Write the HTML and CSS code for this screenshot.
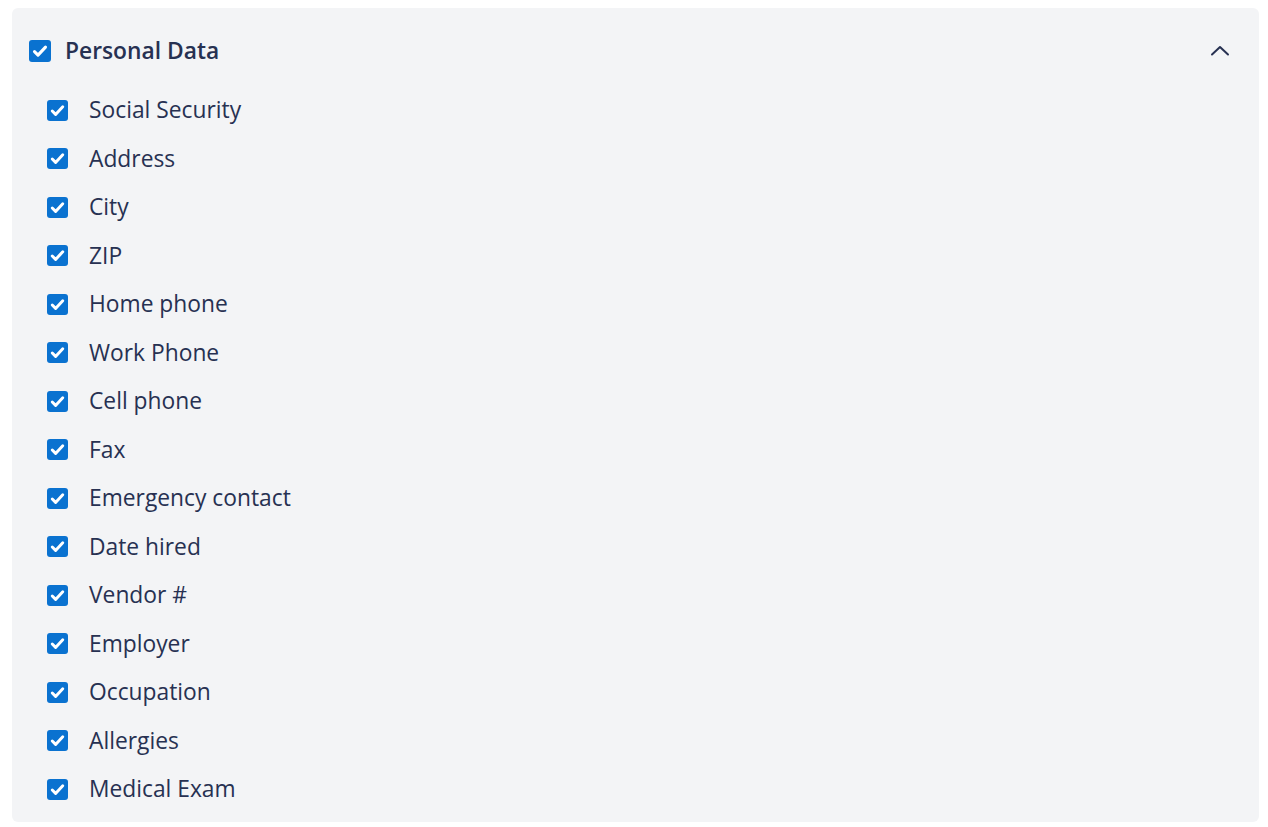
FILE: index.html
```html
<!DOCTYPE html>
<html>
<head>
<meta charset="utf-8">
<link rel="stylesheet" href="styles.css">
</head>
<body>
<section class="panel">
  <div class="header">
    <label class="parent">
      <span class="box box-lg"><svg viewBox="0 0 20 20"><path d="M5 10.5l3.2 3.2L15 6.5" fill="none" stroke="#fff" stroke-width="2.8" stroke-linecap="round" stroke-linejoin="round"/></svg></span>
      <span class="title">Personal Data</span>
    </label>
    <svg class="chev" viewBox="0 0 20 11"><path d="M2 9.5L10 2l8 7.5" fill="none" stroke="#273152" stroke-width="2" stroke-linecap="round" stroke-linejoin="round"/></svg>
  </div>
  <ul class="list">
    <li><span class="box"><svg viewBox="0 0 20 20"><path d="M5 10.5l3.2 3.2L15 6.5" fill="none" stroke="#fff" stroke-width="2.8" stroke-linecap="round" stroke-linejoin="round"/></svg></span><span class="label">Social Security</span></li>
    <li><span class="box"><svg viewBox="0 0 20 20"><path d="M5 10.5l3.2 3.2L15 6.5" fill="none" stroke="#fff" stroke-width="2.8" stroke-linecap="round" stroke-linejoin="round"/></svg></span><span class="label">Address</span></li>
    <li><span class="box"><svg viewBox="0 0 20 20"><path d="M5 10.5l3.2 3.2L15 6.5" fill="none" stroke="#fff" stroke-width="2.8" stroke-linecap="round" stroke-linejoin="round"/></svg></span><span class="label">City</span></li>
    <li><span class="box"><svg viewBox="0 0 20 20"><path d="M5 10.5l3.2 3.2L15 6.5" fill="none" stroke="#fff" stroke-width="2.8" stroke-linecap="round" stroke-linejoin="round"/></svg></span><span class="label">ZIP</span></li>
    <li><span class="box"><svg viewBox="0 0 20 20"><path d="M5 10.5l3.2 3.2L15 6.5" fill="none" stroke="#fff" stroke-width="2.8" stroke-linecap="round" stroke-linejoin="round"/></svg></span><span class="label">Home phone</span></li>
    <li><span class="box"><svg viewBox="0 0 20 20"><path d="M5 10.5l3.2 3.2L15 6.5" fill="none" stroke="#fff" stroke-width="2.8" stroke-linecap="round" stroke-linejoin="round"/></svg></span><span class="label">Work Phone</span></li>
    <li><span class="box"><svg viewBox="0 0 20 20"><path d="M5 10.5l3.2 3.2L15 6.5" fill="none" stroke="#fff" stroke-width="2.8" stroke-linecap="round" stroke-linejoin="round"/></svg></span><span class="label">Cell phone</span></li>
    <li><span class="box"><svg viewBox="0 0 20 20"><path d="M5 10.5l3.2 3.2L15 6.5" fill="none" stroke="#fff" stroke-width="2.8" stroke-linecap="round" stroke-linejoin="round"/></svg></span><span class="label">Fax</span></li>
    <li><span class="box"><svg viewBox="0 0 20 20"><path d="M5 10.5l3.2 3.2L15 6.5" fill="none" stroke="#fff" stroke-width="2.8" stroke-linecap="round" stroke-linejoin="round"/></svg></span><span class="label">Emergency contact</span></li>
    <li><span class="box"><svg viewBox="0 0 20 20"><path d="M5 10.5l3.2 3.2L15 6.5" fill="none" stroke="#fff" stroke-width="2.8" stroke-linecap="round" stroke-linejoin="round"/></svg></span><span class="label">Date hired</span></li>
    <li><span class="box"><svg viewBox="0 0 20 20"><path d="M5 10.5l3.2 3.2L15 6.5" fill="none" stroke="#fff" stroke-width="2.8" stroke-linecap="round" stroke-linejoin="round"/></svg></span><span class="label">Vendor #</span></li>
    <li><span class="box"><svg viewBox="0 0 20 20"><path d="M5 10.5l3.2 3.2L15 6.5" fill="none" stroke="#fff" stroke-width="2.8" stroke-linecap="round" stroke-linejoin="round"/></svg></span><span class="label">Employer</span></li>
    <li><span class="box"><svg viewBox="0 0 20 20"><path d="M5 10.5l3.2 3.2L15 6.5" fill="none" stroke="#fff" stroke-width="2.8" stroke-linecap="round" stroke-linejoin="round"/></svg></span><span class="label">Occupation</span></li>
    <li><span class="box"><svg viewBox="0 0 20 20"><path d="M5 10.5l3.2 3.2L15 6.5" fill="none" stroke="#fff" stroke-width="2.8" stroke-linecap="round" stroke-linejoin="round"/></svg></span><span class="label">Allergies</span></li>
    <li><span class="box"><svg viewBox="0 0 20 20"><path d="M5 10.5l3.2 3.2L15 6.5" fill="none" stroke="#fff" stroke-width="2.8" stroke-linecap="round" stroke-linejoin="round"/></svg></span><span class="label">Medical Exam</span></li>
  </ul>
</section>
</body>
</html>
```
FILE: styles.css
```css
html, body {
  background: #ffffff;
}
body {
  margin: 8px 9px 0 12px;
  font-family: "Open Sans", "Noto Sans", sans-serif;
  color: #273152;
}
.panel {
  background: #f3f4f6;
  border-radius: 6px;
  padding: 20px 29px 8px 17px;
  box-sizing: border-box;
  height: 814px;
}
.header {
  height: 45px;
  display: flex;
  align-items: center;
  justify-content: space-between;
}
.parent {
  display: flex;
  align-items: center;
  gap: 14px;
}
.title {
  font-size: 22.8px;
  font-weight: 600;
  line-height: 1.3;
  margin-top: 0;
}
.chev {
  width: 20px;
  height: 11px;
  display: block;
}
.box {
  width: 21px;
  height: 21px;
  background: #0a72d0;
  border-radius: 3px;
  display: flex;
  align-items: center;
  justify-content: center;
  flex: none;
}
.box svg {
  width: 100%;
  height: 100%;
  display: block;
}
.box-lg {
  width: 22px;
  height: 22px;
}
.list {
  list-style: none;
  margin: 13px 0 0 0;
  padding: 0 0 0 18px;
}
.list li {
  height: 48.5px;
  display: flex;
  align-items: center;
  gap: 21px;
}
.label {
  font-size: 22.8px;
  font-weight: 400;
  line-height: 1.3;
  margin-top: 0;
}
```
